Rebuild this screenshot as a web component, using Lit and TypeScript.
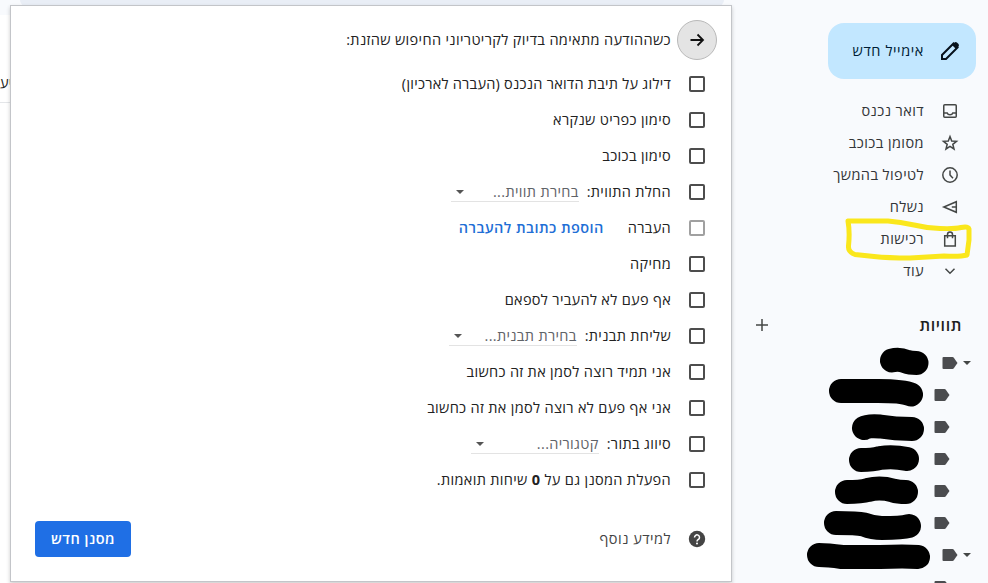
import { LitElement, html, css, svg, nothing } from "lit";
import { customElement } from "lit/decorators.js";
import { classMap } from "lit/directives/class-map.js";

interface FilterOption {
  text: string;
  kind: string;
  select?: string;
  link?: string;
  disabled?: boolean;
}

const OPTIONS: FilterOption[] = [
  { text: "דילוג על תיבת הדואר הנכנס (העברה לארכיון)", kind: "skip" },
  { text: "סימון כפריט שנקרא", kind: "read" },
  { text: "סימון בכוכב", kind: "star" },
  { text: "החלת התווית:", kind: "label", select: "בחירת תווית..." },
  { text: "העברה", kind: "forward", link: "הוספת כתובת להעברה", disabled: true },
  { text: "מחיקה", kind: "delete" },
  { text: "אף פעם לא להעביר לספאם", kind: "spam" },
  { text: "שליחת תבנית:", kind: "template", select: "בחירת תבנית..." },
  { text: "אני תמיד רוצה לסמן את זה כחשוב", kind: "always" },
  { text: "אני אף פעם לא רוצה לסמן את זה כחשוב", kind: "never" },
  { text: "סיווג בתור:", kind: "category", select: "קטגוריה..." },
];

const ICONS = {
  inbox: svg`<rect x="2.75" y="2.75" width="12.5" height="12.5" rx="1"/><path d="M3 11h3.2c.4 1.2 1.5 1.8 2.8 1.8s2.4-.6 2.8-1.8H15"/>`,
  star: svg`<path d="M9 2.6 10.7 7 15.5 7.3 11.8 10.3 13 15 9 12.4 5 15 6.2 10.3 2.5 7.3 7.3 7Z"/>`,
  clock: svg`<circle cx="9" cy="9" r="7.2"/><path d="M9 4.5V9l3 3.2"/>`,
  send: svg`<path d="M15.3 3.7V14.3L2.8 9Z"/><path d="M15.3 9H10.8"/>`,
  bag: svg`<path d="M3.7 5.800H14.3V16H3.700Z"/><path d="M6.500 8.300V4.400a2.500 2.500 0 0 1 5 0V8.300"/>`,
  more: svg`<path d="M4.500 6.800 9 11.200l4.500-4.400"/>`,
};

const NAV = [
  { text: "דואר נכנס", icon: ICONS.inbox },
  { text: "מסומן בכוכב", icon: ICONS.star },
  { text: "לטיפול בהמשך", icon: ICONS.clock },
  { text: "נשלח", icon: ICONS.send },
  { text: "רכישות", icon: ICONS.bag },
  { text: "עוד", icon: ICONS.more },
];

const LABELS = [true, false, false, false, false, false, true, false];

@customElement("filter-panel")
class FilterPanel extends LitElement {
  static styles = css`
    :host {
      display: flex;
      flex-direction: column;
      box-sizing: border-box;
      background: #fff;
      border: 1px solid #c3c5c9;
      box-shadow: 0 2px 4px rgba(0, 0, 0, 0.2);
      padding: 14px 14px 0 24px;
    }
    .head, .option, .foot {
      display: flex;
      align-items: center;
      white-space: nowrap;
    }
    .head { height: 40px; gap: 6px; margin-bottom: 6px; }
    .title { letter-spacing: 0.36px; }
    .skip { letter-spacing: 0.25px; }
    .back {
      box-sizing: border-box;
      width: 40px;
      height: 40px;
      border: 1px solid #b9b9b9;
      border-radius: 50%;
      background: #e4e4e4;
      display: grid;
      place-items: center;
    }
    .option { height: 36px; padding-right: 12px; }
    .box {
      box-sizing: border-box;
      width: 16px;
      height: 16px;
      border: 2px solid #4d4d4d;
      border-radius: 2px;
      margin-left: 18px;
      flex: none;
    }
    .box.disabled { border-color: #a0a0a0; }
    .select {
      box-sizing: border-box;
      display: flex;
      align-items: center;
      justify-content: space-between;
      width: 128px;
      height: 20px;
      margin-right: 8px;
      padding-left: 5px;
      border-bottom: 1px solid #e3e3e3;
      color: #5f6368;
    }
    .arrow {
      border: 4px solid transparent;
      border-top-color: #555;
      border-bottom: 0;
    }
    .link { margin-right: 24px; color: #1f6fd6; font-weight: 600; letter-spacing: 0.43px; }
    .foot { height: 36px; margin-top: 23px; padding-right: 12px; color: #444; letter-spacing: 0.5px; }
    .help { margin-left: 18px; width: 16px; height: 16px; overflow: visible; }
    .create {
      margin-right: auto;
      width: 96px;
      height: 36px;
      border: 0;
      border-radius: 4px;
      background: #1f6fe5;
      color: #fff;
      font: inherit;
      font-weight: 600;
      letter-spacing: inherit;
      padding: 0;
    }
  `;

  render() {
    return html`
      <div class="head">
        <div class="back">
          <svg width="16" height="16" viewBox="0 0 16 16" fill="none" stroke="#111" stroke-width="1.8"><path d="M1.500 8H14M8.500 2.500 14 8 8.500 13.500"/></svg>
        </div>
        <span class="title">כשההודעה מתאימה בדיוק לקריטריוני החיפוש שהזנת:</span>
      </div>
      ${OPTIONS.map((o) => html`
        <div class="option">
          <span class=${classMap({ box: true, disabled: !!o.disabled })}></span>
          <span class=${o.kind}>${o.text}</span>
          ${o.select ? html`<span class="select"><span>${o.select}</span><i class="arrow"></i></span>` : nothing}
          ${o.link ? html`<span class="link">${o.link}</span>` : nothing}
        </div>`)}
      <div class="option">
        <span class="box"></span>
        <span>הפעלת המסנן גם על <b>0</b> שיחות תואמות.</span>
      </div>
      <div class="foot">
        <svg class="help" viewBox="0 0 16 16">
          <circle cx="8" cy="8" r="8.200" fill="#444"/>
          <path d="M5.500 6.400a2.500 2.500 0 1 1 4.100 1.900C8.600 9 8 9.300 8 10.400" fill="none" stroke="#fff" stroke-width="1.500"/>
          <circle cx="8" cy="12.500" r="1" fill="#fff"/>
        </svg>
        <span>למידע נוסף</span>
        <button class="create">מסנן חדש</button>
      </div>
    `;
  }
}

@customElement("mail-sidebar")
class MailSidebar extends LitElement {
  static styles = css`
    :host { display: block; position: relative; box-sizing: border-box; padding-top: 23px; overflow: hidden; }
    .compose {
      box-sizing: border-box;
      display: flex;
      align-items: center;
      width: 148px;
      height: 56px;
      margin-right: 12px;
      padding-right: 16px;
      gap: 16px;
      border-radius: 16px;
      background: #c2e7ff;
      color: #001d35;
      font-weight: 500;
      letter-spacing: 0.6px;
    }
    .nav { margin-top: 16px; letter-spacing: 0.42px; }
    .item { display: flex; align-items: center; height: 32px; padding-right: 29px; gap: 17px; color: #333538; white-space: nowrap; }
    .icon { width: 18px; height: 18px; fill: none; stroke: #444746; stroke-width: 1.5; }
    .heading {
      display: flex;
      align-items: center;
      justify-content: space-between;
      height: 32px;
      margin-top: 22px;
      padding: 0 26px 0 24px;
      font-size: 16px;
      font-weight: 600;
      letter-spacing: 0.6px;
      color: #1f1f1f;
    }
    .labels { margin-top: 6px; }
    .label { display: flex; align-items: center; height: 32px; padding-right: 38px; gap: 5px; }
    .label.parent { padding-right: 17px; }
    .caret { border: 4px solid transparent; border-top-color: #444746; border-bottom: 0; }
    .ink { position: absolute; inset: 0; pointer-events: none; }
  `;

  render() {
    return html`
      <div class="compose">
        <svg width="20" height="20" viewBox="0 0 20 20"><path d="M2 18v-4L13.500 2.500l4 4L6 18Z" fill="none" stroke="#07121c" stroke-width="2"/><path d="M12 4l2.500-2.500q1.200-1 2.400 0l1.600 1.600q1 1.200 0 2.400L16 8Z" fill="#07121c"/></svg>
        <span>אימייל חדש</span>
      </div>
      <nav class="nav">
        ${NAV.map((n) => html`<div class="item"><svg class="icon" viewBox="0 0 18 18">${n.icon}</svg><span>${n.text}</span></div>`)}
      </nav>
      <div class="heading">
        <span>תוויות</span>
        <svg width="12" height="12" viewBox="0 0 12 12" stroke="#444746" stroke-width="1.500"><path d="M6 0V12M0 6H12"/></svg>
      </div>
      <div class="labels">
        ${LABELS.map((parent) => html`
          <div class=${classMap({ label: true, parent })}>
            ${parent ? html`<i class="caret"></i>` : nothing}
            <svg width="16" height="12" viewBox="0 0 16 12"><path d="M1.500 0H10.500q.8 0 1.300.7L15.500 6 11.800 11.300q-.5.7-1.300.7H1.500Q.5 12 .5 11V1Q.5 0 1.500 0Z" fill="#4b4c4f"/></svg>
          </div>`)}
      </div>
      <svg class="ink" width="256" height="583" viewBox="732 0 256 583" fill="none" stroke-linecap="round" stroke-linejoin="round">
        <g stroke="#000" stroke-width="24">
          <path d="M892 360.500Q899 358.500 906 361.500Q910 363 916.500 363"/>
          <path d="M841 391H878Q903 391 911 394.500"/>
          <path d="M864 428Q868 425.500 880 426.500Q895 429 912 429"/>
          <path d="M861 460Q873 460 880 458Q893 456 907 459"/>
          <path d="M847 492Q861 492 868 490Q880 487 893 490.500Q898 492 906 492"/>
          <path d="M836 523Q857 523 864 524.500Q873 528 882 528Q902 528 909 526"/>
          <path d="M819 555Q828 555 842 557H880Q905 556 918 557"/>
        </g>
        <path stroke="#fae71c" stroke-width="5" d="M848 221H888Q900 222 914 225Q926 228 940 228.500Q955 229 961 227.500Q968 226 969 229V240L967 255Q960 257 944 256Q926 257 910 258Q888 258 874 256.500L855 254.500Q848 252 848.500 246Q850 232 848 221Z"/>
      </svg>
    `;
  }
}

@customElement("app-root")
class AppRoot extends LitElement {
  static styles = css`
    :host {
      display: grid;
      grid-template-columns: 256px 1fr;
      position: relative;
      width: 988px;
      height: 583px;
      overflow: hidden;
      direction: rtl;
      background: #f8fafd;
      color: #222;
      font: 14.5px/20px "Open Sans", "Noto Sans", sans-serif;
      letter-spacing: 0.33px;
    }
    .mail { display: flex; flex-direction: column; overflow: hidden; }
    .search { height: 6px; margin: 0 8px 9px 20px; background: #e9eef6; border-radius: 0 0 8px 8px; }
    .list { flex: 1; background: #fff; padding-top: 56px; }
    .row { direction: ltr; height: 31px; line-height: 24px; border-bottom: 1px solid #e4e6e9; }
    .panel { position: absolute; left: 10px; top: 5px; width: 722px; height: 577px; }
  `;

  render() {
    return html`
      <mail-sidebar></mail-sidebar>
      <main class="mail">
        <div class="search"></div>
        <div class="list"><div class="row">יע</div></div>
      </main>
      <filter-panel class="panel"></filter-panel>
    `;
  }
}
